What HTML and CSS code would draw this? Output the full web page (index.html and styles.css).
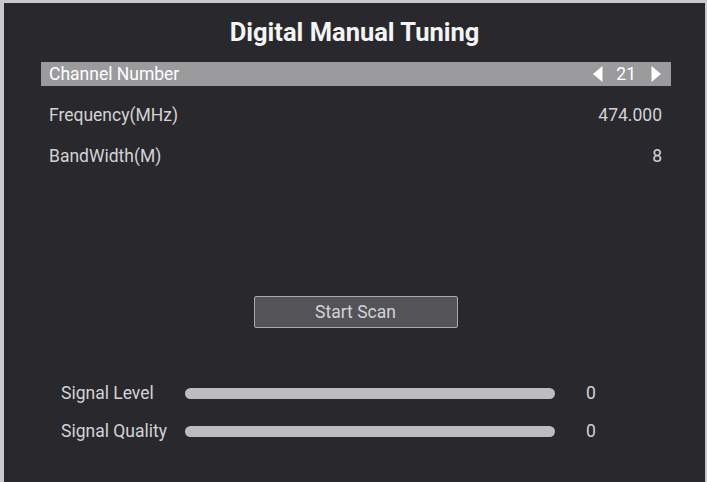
FILE: index.html
```html
<!DOCTYPE html>
<html lang="en">
<head>
  <meta charset="UTF-8">
  <meta name="viewport" content="width=device-width, initial-scale=1.0">
  <title>Digital Manual Tuning</title>
  <link rel="stylesheet" href="styles.css">
</head>
<body>
  <div class="panel">
    <h1 class="title">Digital Manual Tuning</h1>

    <div class="options">
      <div class="option selected">
        <span class="option-label">Channel Number</span>
        <span class="option-value">
          <svg class="arrow" width="11" height="18" viewBox="0 0 11 18"><path d="M10.5 1 L1 9 L10.5 17 Z" fill="#fff"/></svg>
          <span class="channel">21</span>
          <svg class="arrow" width="11" height="18" viewBox="0 0 11 18"><path d="M0.5 1 L10 9 L0.5 17 Z" fill="#fff"/></svg>
        </span>
      </div>
      <div class="option">
        <span class="option-label">Frequency(MHz)</span>
        <span class="option-value">474.000</span>
      </div>
      <div class="option">
        <span class="option-label">BandWidth(M)</span>
        <span class="option-value">8</span>
      </div>
    </div>

    <div class="actions">
      <button class="scan-button">Start Scan</button>
    </div>

    <div class="signals">
      <div class="signal">
        <span class="signal-label">Signal Level</span>
        <div class="signal-bar"></div>
        <span class="signal-value">0</span>
      </div>
      <div class="signal">
        <span class="signal-label">Signal Quality</span>
        <div class="signal-bar"></div>
        <span class="signal-value">0</span>
      </div>
    </div>
  </div>
</body>
</html>
```

FILE: styles.css
```css
html, body {
  height: 100%;
}
body {
  margin: 0;
  background: #c9c9cb;
  font-family: Roboto, "Liberation Sans", sans-serif;
  color: #d3d3d5;
}
.panel {
  box-sizing: border-box;
  height: calc(100% - 3px);
  margin: 3px 2px 0 4px;
  background: #29282d;
  padding: 13px 0 0;
}
.title {
  margin: 0;
  text-align: center;
  font-size: 25.5px;
  font-weight: 700;
  color: #f4f4f4;
  line-height: 32px;
}
.options {
  margin: 14px 34px 0 37px;
  display: flex;
  flex-direction: column;
  gap: 17px;
}
.option {
  display: flex;
  justify-content: space-between;
  align-items: center;
  height: 24px;
  padding: 0 9px 0 8px;
  font-size: 17.5px;
}
.option.selected {
  background: #9b9b9d;
  color: #fff;
}
.option-value {
  display: flex;
  align-items: center;
}
.channel {
  margin: 0 15px 0 13px;
}
.actions {
  display: flex;
  justify-content: center;
  margin-top: 128px;
}
.scan-button {
  width: 204px;
  height: 32px;
  margin-left: 2px;
  background: #545358;
  border: 1px solid #a9a9ad;
  border-radius: 2px;
  color: #d3d3d5;
  font-family: inherit;
  font-size: 17.5px;
}
.signals {
  margin: 54px 0 0 57px;
  display: flex;
  flex-direction: column;
  gap: 16px;
}
.signal {
  display: flex;
  align-items: center;
  height: 22px;
  font-size: 17.5px;
}
.signal-label {
  width: 124px;
}
.signal-bar {
  width: 370px;
  height: 11px;
  border-radius: 6px;
  background: #bdbdc0;
}
.signal-value {
  margin-left: 31px;
}
```
